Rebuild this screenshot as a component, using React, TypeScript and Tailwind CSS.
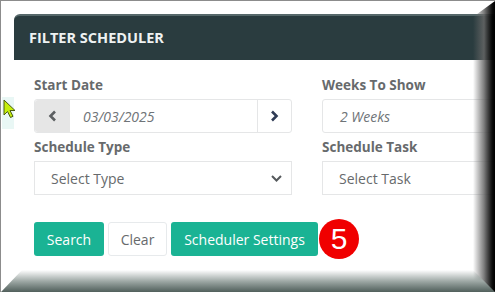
import React from "react";

const ChevronLeft = () => (
  <svg width="9" height="12" viewBox="0 0 9 12" fill="none">
    <path d="M7 1.5L2.5 6L7 10.5" stroke="#5c5f61" strokeWidth="2.6" />
  </svg>
);

const ChevronRight = () => (
  <svg width="9" height="12" viewBox="0 0 9 12" fill="none">
    <path d="M2 1.5L6.5 6L2 10.5" stroke="#2f3b55" strokeWidth="2.6" />
  </svg>
);

const ChevronDown = () => (
  <svg width="11" height="7" viewBox="0 0 11 7" fill="none">
    <path d="M1 1L5.5 5.5L10 1" stroke="#55595c" strokeWidth="2" />
  </svg>
);

const Cursor = () => (
  <svg width="14" height="20" viewBox="0 0 14 20">
    <path d="M1 1L1 16L4.5 12.5L7.5 18.5L10 17.3L7 11.5L12 11.5Z" fill="#c6ef0c" stroke="#4a5a10" strokeWidth="1" />
  </svg>
);

const Label = ({ children }: { children: React.ReactNode }) => (
  <div className="text-[13.5px] font-bold leading-[18px] text-[#676a6c] mb-[5px]">{children}</div>
);

const Select = ({ text }: { text: string }) => (
  <div className="h-[34px] border border-[#e5e6e7] flex items-center justify-between pl-[16px] pr-[9px] text-[14px] text-[#676a6c]">
    <span>{text}</span>
    <ChevronDown />
  </div>
);

export default function App() {
  return (
    <div className="relative w-[495px] h-[292px] overflow-hidden bg-white border-l border-t border-[#8c8c8c] font-['Open_Sans',sans-serif]">
      <div className="pl-[13px] pt-[13px] w-[640px]">
        <div className="rounded-t-[6px] h-[46px] bg-[#2a3c3f] border-t-[2px] border-[#56686a] flex items-center pl-[15px]">
          <span className="text-[14.5px] font-bold text-[#eef2f2]">FILTER SCHEDULER</span>
        </div>
        <div className="pl-[20px] pt-[16px]">
          <div className="grid grid-cols-[258px_258px] gap-x-[30px]">
            <div>
              <Label>Start Date</Label>
              <div className="h-[34px] flex border border-[#e5e6e7] rounded-[3px]">
                <div className="w-[35px] bg-[#e6e6e6] flex items-center justify-center rounded-l-[3px]">
                  <ChevronLeft />
                </div>
                <div className="flex-1 flex items-center pl-[13px] italic text-[14px] text-[#6f7478]">03/03/2025</div>
                <div className="w-[34px] border-l border-[#e5e6e7] flex items-center justify-center">
                  <ChevronRight />
                </div>
              </div>
            </div>
            <div>
              <Label>Weeks To Show</Label>
              <div className="h-[34px] border border-[#e5e6e7] rounded-[3px] flex items-center pl-[17px] italic text-[14px] text-[#6f7478]">
                2 Weeks
              </div>
            </div>
            <div className="mt-[5px]">
              <Label>Schedule Type</Label>
              <Select text="Select Type" />
            </div>
            <div className="mt-[5px]">
              <Label>Schedule Task</Label>
              <Select text="Select Task" />
            </div>
          </div>
          <div className="flex items-center gap-[4px] mt-[24px] text-[14px]">
            <button className="h-[34px] w-[70px] rounded-[3px] bg-[#1ab394] text-white">Search</button>
            <button className="h-[34px] w-[59px] rounded-[3px] bg-white border border-[#e7eaec] text-[#676a6c]">Clear</button>
            <button className="h-[34px] w-[147px] rounded-[3px] bg-[#1ab394] text-white">Scheduler Settings</button>
            <div className="ml-[-3px] w-[40px] h-[40px] rounded-full bg-[#f00000] flex items-center justify-center text-white text-[30px] font-['Liberation_Sans',sans-serif] leading-none">
              5
            </div>
          </div>
        </div>
      </div>

      {/* cursor on the left edge */}
      <div className="absolute left-[1px] top-[96px] w-[12px] h-[32px] bg-[#e9f7f5]">
        <div className="absolute left-[1px] top-[2px]">
          <Cursor />
        </div>
      </div>

      {/* bevel frame */}
      <div className="absolute right-0 top-0 w-[22px] h-full bg-gradient-to-r from-white/0 via-[#666]/85 to-black [clip-path:polygon(0_16px,100%_0,100%_100%,0_100%)]" />
      <div className="absolute left-0 bottom-0 w-full h-[22px] bg-gradient-to-b from-white/0 via-[#a0aaa7] to-[#51605c] [clip-path:polygon(21px_0,calc(100%-22px)_0,100%_100%,0_100%)]" />
    </div>
  );
}
